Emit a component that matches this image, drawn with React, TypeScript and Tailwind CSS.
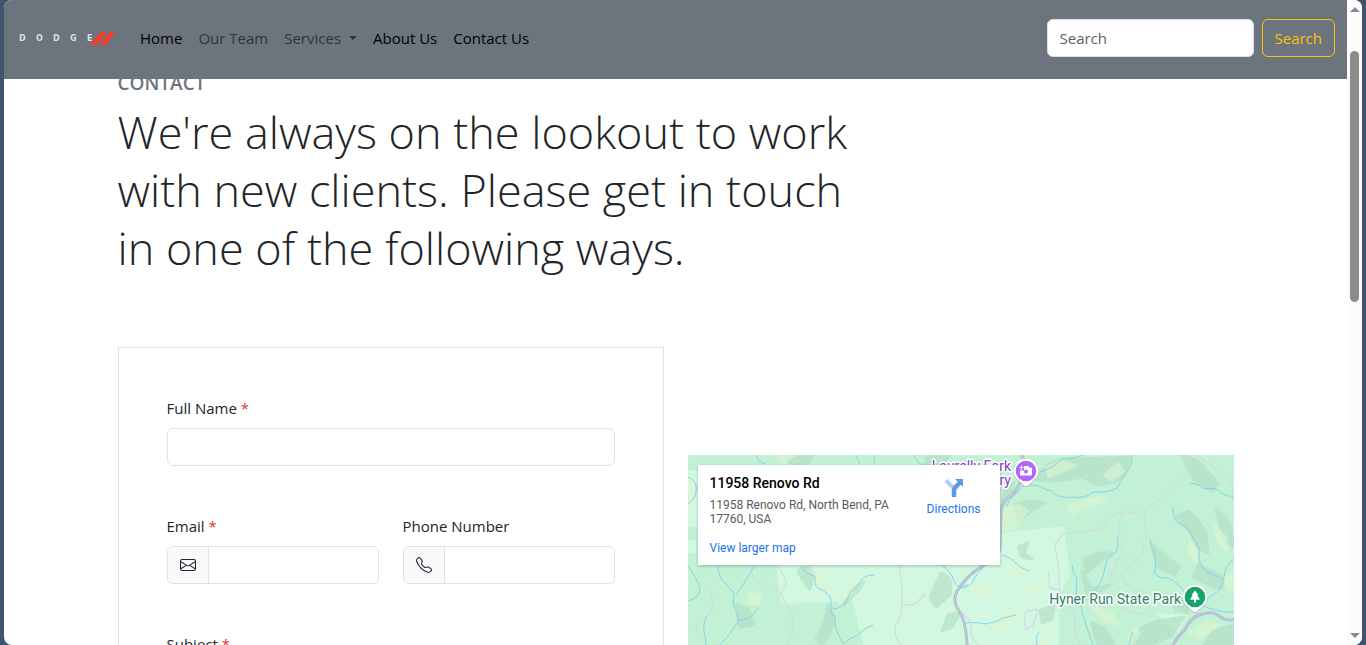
import type { ReactNode } from "react";
import { BsEnvelope, BsTelephone } from "react-icons/bs";

const waters = [
  "M0 22 Q10 26 8 37 Q6 46 0 48",
  "M0 110 Q8 122 12 133 Q12 143 0 146",
  "M30 110 Q30 122 36 127 L46 138 L45 150 Q51 160 50 167 Q42 180 32 190",
  "M67 110 L61 120 L56 128 L48 140",
  "M71 152 L62 163 L50 166",
  "M113 112 Q119 120 127 121 Q126 130 130 133 Q142 138 143 146 L143 158 Q149 160 147 172 L155 189",
  "M187 120 Q175 119 170 130 Q162 136 159 145 Q153 154 145 154",
  "M185 170 Q176 173 170 180 Q162 183 155 189",
  "M253 110 Q263 116 266 126 Q268 134 280 130",
  "M68 0 Q70 8 76 8 L80 12",
  "M168 0 L172 10",
  "M187 0 L186 10",
  "M226 0 Q229 8 235 10",
  "M18 162 Q14 174 17 180 L18 190",
  "M444 0 Q444 12 438 18 L429 33 Q420 38 405 37 Q398 44 385 42 Q370 44 364 36 Q356 35 352 31 L340 30",
  "M395 0 Q382 5 375 3 Q364 14 352 17",
  "M502 28 Q512 29 516 34 Q528 31 535 39 L546 43",
  "M485 52 Q484 64 492 69 Q502 73 506 84 Q512 90 511 102 Q512 114 521 118 L535 124",
  "M546 104 Q536 112 537 118 L534 130 Q531 138 521 142 L508 158",
  "M462 84 Q462 92 466 97 Q469 110 466 118 Q471 124 480 123 Q496 130 505 152",
  "M429 82 Q431 92 428 97 Q417 104 417 113 Q414 130 404 137",
  "M384 110 Q385 119 389 123 L388 140 Q394 146 394 158 L405 190",
  "M314 100 Q322 102 328 108 Q333 114 342 116",
  "M277 168 Q290 167 297 169 Q307 168 315 163 L328 160",
  "M351 177 Q347 182 349 190",
  "M445 177 Q442 184 441 190",
  "M272 133 Q284 133 287 122 L297 110",
  "M546 157 Q536 158 527 155 L512 150",
  "M318 52 Q320 46 328 38 L336 30",
];

const lanes = [
  "M500 0 Q503 14 496 21 Q490 30 483 34 Q470 44 459 55 Q450 59 439 57 Q424 59 420 65 Q419 73 407 75 L375 79 L367 89 L371 118 L372 146",
  "M435 58 Q430 66 432 78 Q431 90 435 98 Q428 103 421 127 Q427 131 432 133 L430 140 L418 138",
  "M457 58 Q456 72 459 82 Q454 92 454 102 Q440 108 434 122 Q440 136 459 138",
  "M360 115 L362 133 L372 135",
  "M369 155 L341 155 L336 159 L338 175 L345 170 L349 158",
  "M380 148 L387 160 L387 175 L392 190",
  "M434 154 L457 160 L462 151",
  "M505 0 Q514 2 520 8 Q530 18 539 22 Q546 28 545 44",
  "M63 110 Q62 122 70 126 L92 137 L98 150 Q108 162 105 175 L100 190",
  "M88 110 Q98 120 98 130 L93 138",
  "M211 110 L214 128 L214 150 Q214 162 207 172 Q206 182 213 190",
  "M214 150 Q226 151 230 146 L238 138",
  "M22 137 L25 150 L20 160 L10 165 L8 175",
  "M272 156 L282 166 L284 182 L290 190",
];

const highways = [
  "M333 0 Q338 6 337 14 Q333 30 324 40 Q313 44 313 60 L312 95 Q302 108 290 114 Q278 122 269 136 Q264 146 271 156 Q278 166 279 190",
  "M485 190 Q492 178 497 175 Q503 161 515 159 Q526 156 531 161 Q539 167 546 164",
];

const shades = [
  "M110 116 Q118 108 126 118 L122 134 Q116 128 110 116",
  "M140 150 L146 162 L142 178 L134 190 L128 184 Q138 168 140 150",
  "M162 136 L176 127 L170 136 L156 150 Z",
  "M48 150 L60 154 L66 170 L52 172 Z",
  "M253 118 Q266 122 262 140 L248 152 L242 142 Z",
  "M240 0 L262 0 L255 10 L236 10 Z",
  "M96 0 L125 0 L120 8 L104 10 Z",
  "M272 158 L264 172 L254 176 L260 160 Z",
  "M345 24 Q356 10 372 5 L442 2 Q438 18 430 26 L410 30 L394 22 L368 26 Z",
  "M318 32 L326 28 L322 42 L314 50 Z",
  "M326 50 Q340 45 356 48 L344 56 L330 66 Z",
  "M494 0 L510 6 L530 28 L524 36 L506 24 Z",
  "M488 62 L500 56 Q512 66 518 78 L520 98 L508 92 L502 76 Z",
  "M528 54 L542 68 L546 92 L536 86 Z",
  "M510 110 L532 120 L538 134 L524 132 L506 122 Z",
  "M463 88 L474 98 L492 112 L486 120 L470 112 Z",
  "M396 104 L410 98 L424 98 L412 106 L398 118 Z",
  "M394 116 L404 134 L422 130 L400 144 Z",
  "M330 92 L340 88 L336 98 L344 104 L334 102 Z",
  "M404 168 Q420 172 426 190 L410 190 Z",
  "M450 176 Q460 168 470 166 L496 162 L484 180 L462 190 L444 190 Z",
  "M352 156 L366 150 L364 164 L354 168 Z",
  "M524 176 L546 170 L546 190 L516 190 Z",
  "M484 140 L498 146 L500 158 L488 154 Z",
];

const highlights = [
  "M122 110 L136 122 L142 138 L130 130 Z",
  "M150 142 L170 124 L164 138 L150 150 Z",
  "M88 0 L108 0 L96 8 Z",
  "M316 54 Q324 50 332 50 L340 56 L326 74 L314 76 Z",
  "M358 12 L374 6 L388 10 L372 18 L360 22 Z",
  "M380 50 L410 42 L418 46 L396 54 L384 60 Z",
  "M416 20 L430 8 L436 16 L424 26 Z",
  "M286 130 L302 126 L304 138 L292 142 Z",
  "M320 108 L340 112 L332 122 L322 118 Z",
  "M340 132 L358 126 L354 136 L342 142 Z",
  "M316 156 L330 150 L326 166 L314 180 L306 176 Z",
  "M354 178 L364 172 L360 188 L352 190 Z",
  "M404 152 L424 158 L432 170 L416 166 Z",
  "M502 84 L510 96 L508 108 L500 96 Z",
  "M526 70 L538 82 L540 98 L530 88 Z",
  "M500 178 L520 166 L532 170 L512 184 Z",
  "M538 122 L546 118 L546 136 L536 134 Z",
  "M0 30 L8 34 L6 50 L0 54 Z",
  "M62 138 L74 140 L70 150 L58 148 Z",
  "M440 182 L448 172 L452 178 L444 190 Z",
];

function DodgeLogo() {
  return (
    <svg viewBox="0 0 100 16" className="h-4 w-[100px]" role="img" aria-label="Dodge">
      <text
        x="3 20 37 54 71"
        y="11"
        fill="#dcdfe2"
        fontFamily="'DejaVu Sans', sans-serif"
        fontSize="8"
        fontWeight="700"
      >
        DODGE
      </text>
      <path d="M74 15 L85 2 H91 L81 15 Z M84 15 L94 2 H99 L90 15 Z" fill="#ff3a26" />
    </svg>
  );
}

function NavBar() {
  return (
    <header className="relative z-10 flex h-[79px] shrink-0 items-center bg-[#6c757d] px-3 pb-1">
      <a href="#home" className="mr-6">
        <DodgeLogo />
      </a>
      <nav className="flex grow gap-4 text-[15px] leading-6 text-black">
        <a href="#home">Home</a>
        <a href="#team" className="text-[#2f3439]">Our Team</a>
        <button type="button" className="flex items-center gap-2 text-[#2f3439]">
          Services
          <span className="border-x-4 border-t-4 border-x-transparent border-t-[#2f3439]" />
        </button>
        <a href="#about">About Us</a>
        <a href="#contact">Contact Us</a>
      </nav>
      <form className="flex gap-2 text-[15px] leading-6">
        <input
          type="search"
          placeholder="Search"
          aria-label="Search"
          className="h-[38px] w-[207px] rounded-md border border-[#dee2e6] bg-white px-3 text-[#212529] placeholder:text-[#5b6167]"
        />
        <button
          type="button"
          className="h-[38px] rounded-md border border-[#ffc107] px-3 text-[#ffc107]"
        >
          Search
        </button>
      </form>
    </header>
  );
}

type FieldProps = {
  id: string;
  label: string;
  type?: string;
  required?: boolean;
  icon?: ReactNode;
};

function Field({ id, label, type = "text", required, icon }: FieldProps) {
  return (
    <div className="min-w-0 flex-1">
      <label htmlFor={id} className="mb-2 block text-[15px] leading-6">
        {label} {required && <span className="text-[#dc3545]">*</span>}
      </label>
      <div className="flex h-[38px] overflow-hidden rounded-md border border-[#dee2e6]">
        {icon && (
          <span className="flex items-center border-r border-[#dee2e6] bg-[#f8f9fa] px-3">
            {icon}
          </span>
        )}
        <input id={id} type={type} required={required} className="w-full min-w-0 px-3" />
      </div>
    </div>
  );
}

function ContactForm() {
  return (
    <form className="flex flex-col gap-12 border border-[#dee2e6] p-12">
      <Field id="fullname" label="Full Name" required />
      <div className="flex gap-6">
        <Field id="email" label="Email" type="email" required icon={<BsEnvelope size={16} />} />
        <Field id="phone" label="Phone Number" type="tel" icon={<BsTelephone size={16} />} />
      </div>
      <Field id="subject" label="Subject" required />
    </form>
  );
}

function Strokes({ paths, color, width }: { paths: string[]; color: string; width: number }) {
  return (
    <g fill="none" stroke={color} strokeWidth={width} strokeLinejoin="round">
      {paths.map((d) => (
        <path key={d} d={d} />
      ))}
    </g>
  );
}

function MapPin({ x, y, color, children }: { x: number; y: number; color: string; children: ReactNode }) {
  const outline = "M0 -12 A12 12 0 0 1 8.500 8.500 L2 14.500 Q0 16 -2 14.500 L-8.500 8.500 A12 12 0 0 1 0 -12 Z";
  return (
    <g transform={`translate(${x} ${y})`}>
      <path d={outline} fill="#4b6b5a" opacity="0.3" transform="translate(0 1)" />
      <path d={outline} fill="#fff" />
      <circle r="10.300" fill={color} />
      {children}
    </g>
  );
}

function MapCanvas() {
  return (
    <svg
      viewBox="0 0 546 450"
      preserveAspectRatio="xMidYMin slice"
      className="h-full w-full"
      fontFamily="Roboto, sans-serif"
    >
      <rect width="546" height="450" fill="#c3f1d5" />
      <path
        d="M87 100 L314 78 L376 71 L382 120 L371 140 L371 190 L175 190 L165 146 L93 149 Z M0 15 H10 V72 H0 Z M0 85 H8 V98 H0 Z M468 158 L500 160 L490 178 Z"
        fill="#d3f8e2"
      />
      <g fill="#b0dcc3" opacity="0.6" stroke="#b0dcc3" strokeWidth="3" strokeLinejoin="round">
        {shades.map((d) => (
          <path key={d} d={d} />
        ))}
      </g>
      <g fill="#dff6d3" opacity="0.6" stroke="#dff6d3" strokeWidth="2" strokeLinejoin="round">
        {highlights.map((d) => (
          <path key={d} d={d} />
        ))}
      </g>
      <Strokes paths={lanes} color="#cfdde0" width={1.3} />
      <Strokes paths={waters} color="#85d3ee" width={1} />
      <Strokes paths={highways} color="#a9b5c9" width={2.8} />
      <Strokes paths={highways} color="#c4cbdd" width={1.4} />

      <g stroke="#fff" strokeWidth="3" strokeLinejoin="round" paintOrder="stroke">
        <text x="323" y="16" textAnchor="end" fontSize="14" fill="#8440cf">
          Laurelly Fork
        </text>
        <text x="323" y="30" textAnchor="end" fontSize="14" fill="#8440cf">
          ry
        </text>
        <text x="493" y="149" textAnchor="end" fontSize="14" fill="#2f8265">
          Hyner Run State Park
        </text>
      </g>

      <MapPin x={338} y={16} color="#b266ff">
        <path
          d="M-2 -5 H2 L3.500 -3.500 H5 Q6 -3.500 6 -2.500 V3.500 Q6 4.500 5 4.500 H-5 Q-6 4.500 -6 3.500 V-0.500 H-2 Z"
          fill="#fff"
        />
        <circle cy="0.500" r="2" fill="#b266ff" />
        <path d="M-4.500 -5.500 V-1.500 M-6.500 -3.500 H-2.500" stroke="#fff" strokeWidth="1" />
      </MapPin>

      <MapPin x={507} y={142} color="#18a26c">
        <path
          d="M0 -6.500 L3.500 -2 H2.300 L5 2.800 H1 V5.500 H-1 V2.800 H-5 L-2.300 -2 H-3.500 Z"
          fill="#fff"
        />
      </MapPin>
    </svg>
  );
}

function PlaceCard() {
  return (
    <div className="absolute top-[10px] left-[10px] flex h-[100px] w-[302px] justify-between bg-white pt-[9px] pr-[19px] pl-3 font-[Roboto,sans-serif] text-xs shadow-[0_1px_3px_rgba(0,0,0,0.25)]">
      <div className="w-[186px]">
        <h2 className="text-sm leading-[18px] font-medium text-black">11958 Renovo Rd</h2>
        <p className="mt-[6px] leading-[14px] text-[#5b5b5b]">
          11958 Renovo Rd, North Bend, PA 17760, USA
        </p>
        <a href="#map" className="mt-[15px] block leading-[14px] text-[#1a73e8]">
          View larger map
        </a>
      </div>
      <a href="#directions" className="flex flex-col items-center pt-[3px] text-[#1a73e8]">
        <svg viewBox="0 0 22 22" className="size-[22px]" aria-hidden="true">
          <path d="M3 3.500 L10.500 11" stroke="#b1d0f5" strokeWidth="4" />
          <path d="M11 20 V14 Q11 11.500 13 9.500 L17 5.500" fill="none" stroke="#5c9ae6" strokeWidth="4.500" />
          <path d="M12 2 H20 V10 Z" fill="#5c9ae6" />
        </svg>
        <span className="mt-[3px] leading-[14px]">Directions</span>
      </a>
    </div>
  );
}

function ScrollBar() {
  return (
    <div className="flex w-[15px] shrink-0 flex-col items-center bg-[#fcfcfc] py-[7px]">
      <span className="border-x-[5px] border-b-[5px] border-x-transparent border-b-[#8b8b8b]" />
      <span className="mt-[39px] h-[251px] w-[9px] rounded-full bg-[#8b8b8b]" />
      <span className="mt-auto border-x-[5px] border-t-[5px] border-x-transparent border-t-[#8b8b8b]" />
    </div>
  );
}

export default function App() {
  return (
    <div className="h-screen bg-[#40546d] px-1 font-['Open_Sans',sans-serif] text-[#212529]">
      <div className="flex h-full overflow-hidden rounded-lg bg-white">
        <div className="flex min-w-0 grow flex-col overflow-hidden">
          <NavBar />
          <main className="mx-auto -mt-2 w-full max-w-[1140px] px-3">
            <h1 className="text-[19px] leading-6 font-semibold text-[#6c757d] uppercase">Contact</h1>
            <p className="mt-2 max-w-[752px] text-[45px] leading-[58px] font-light">
              We're always on the lookout to work with new clients. Please get in touch in one of
              the following ways.
            </p>
            <div className="mt-[70px] grid grid-cols-2 items-start gap-6">
              <ContactForm />
              <div className="mt-[108px]">
                <div className="relative h-[450px] overflow-hidden bg-[#c3f1d5]">
                  <MapCanvas />
                  <PlaceCard />
                </div>
              </div>
            </div>
          </main>
        </div>
        <ScrollBar />
      </div>
    </div>
  );
}
